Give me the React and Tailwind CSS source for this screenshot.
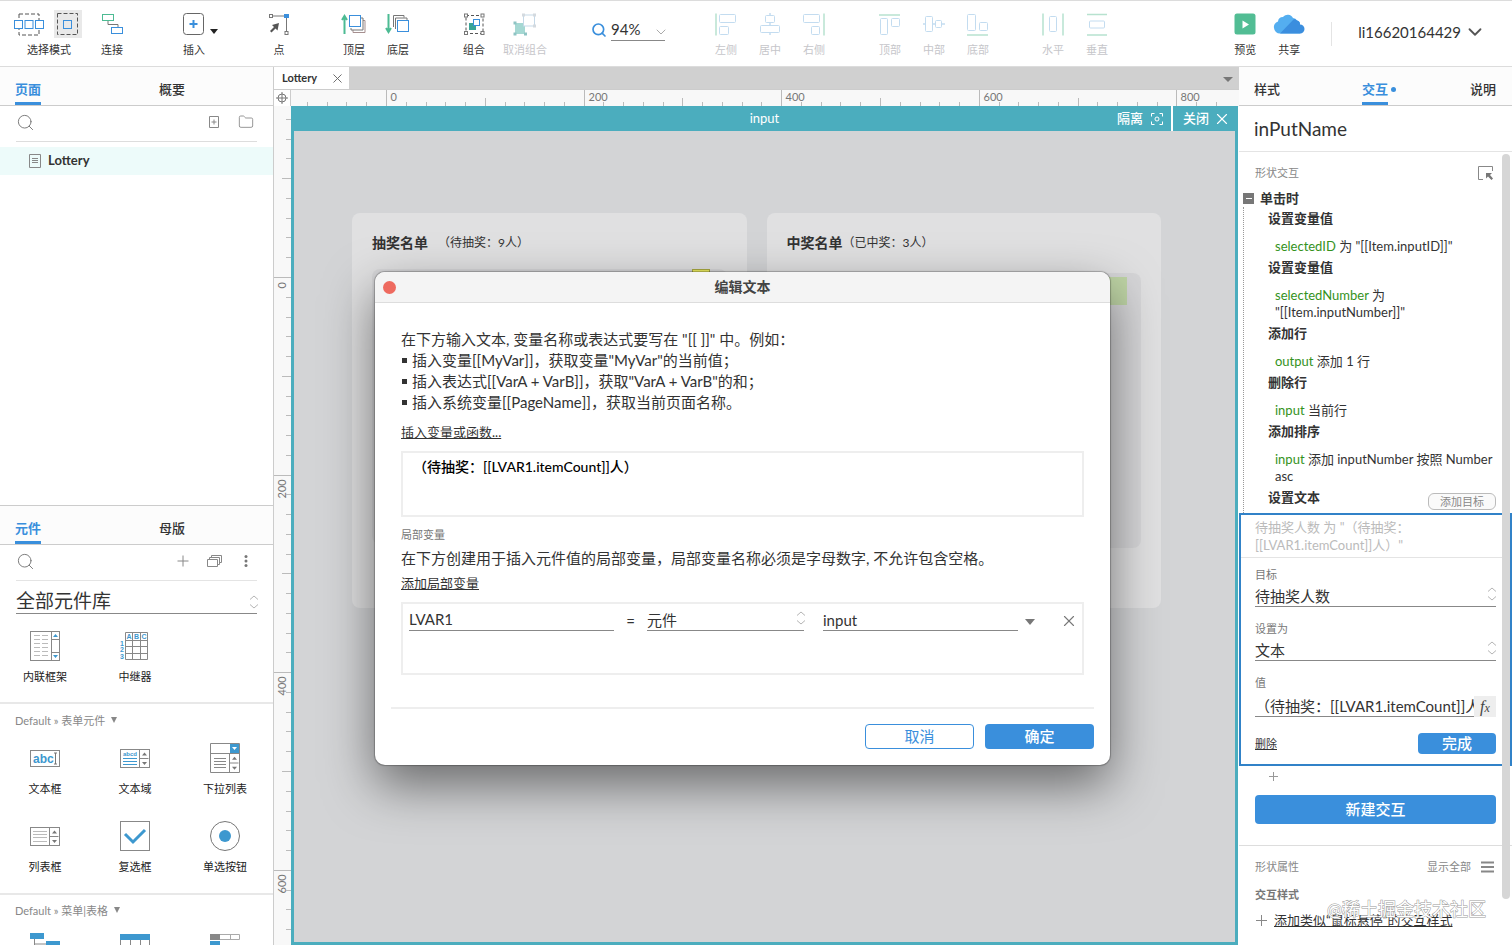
import React from 'react';
import { ChevronDown, Folder, Search, X } from 'lucide-react';

const BLUE = '#3a8fdc';
const GREEN = '#4dbb93';
const GRAY = '#777';

/* ---------- toolbar icons ---------- */

const Svg = ({ w = 26, h = 26, children, ...rest }) => (
  <svg width={w} height={h} viewBox={`0 0 ${w} ${h}`} fill="none" aria-hidden="true" {...rest}>
    {children}
  </svg>
);

const SelectIntersect = () => (
  <Svg w={30}>
    <rect x="5" y="3" width="20" height="21" stroke="#555" strokeDasharray="4 2" />
    <g fill="#fff" stroke={BLUE}>
      <rect x="0.5" y="9.5" width="8" height="8" />
      <rect x="11" y="9.5" width="8" height="8" />
      <rect x="21.5" y="9.5" width="8" height="8" />
    </g>
  </Svg>
);

const SelectContain = () => (
  <Svg>
    <rect x="3.5" y="2.5" width="20" height="21" stroke="#555" strokeDasharray="4 2" />
    <rect x="9.5" y="9.5" width="8" height="8" stroke={BLUE} />
  </Svg>
);

const Connect = () => (
  <Svg>
    <path d="M9 9.5v4h10v3" stroke={GRAY} />
    <rect x="3.5" y="3.5" width="11" height="6" stroke={GREEN} />
    <rect x="12.5" y="16.5" width="11" height="6" stroke={BLUE} />
  </Svg>
);

const Insert = () => (
  <Svg>
    <rect x="2.5" y="2.5" width="20" height="21" rx="3" stroke="#666" />
    <path d="M12.5 9v8M8.5 13h8" stroke={BLUE} strokeWidth="2" />
  </Svg>
);

const PointIcon = () => (
  <Svg>
    <path d="M5 5h15.500v17" stroke={GRAY} />
    <rect x="3.5" y="3.5" width="3" height="3" fill="#fff" stroke={GRAY} />
    <rect x="18" y="3" width="5" height="4" fill={BLUE} />
    <rect x="19" y="20.5" width="3" height="3" fill="#fff" stroke={GRAY} />
    <path d="M13 12l-7 2 2 2-4 4 1.500 1.500 4-4 2 2z" fill="#555" />
  </Svg>
);

const ToFront = () => (
  <Svg>
    <path d="M3.500 23V5M1 9l2.500-4L6 9" stroke={GREEN} strokeWidth="2" />
    <path d="M12 19v2.500h12V9.500h-2" stroke="#a58f8f" />
    <path d="M10 17v2h12V7h-2" stroke={GRAY} />
    <rect x="8.500" y="4.500" width="11" height="11" fill="#fff" stroke={BLUE} />
  </Svg>
);

const ToBack = () => (
  <Svg>
    <path d="M3.500 3v18M1 17l2.500 4L6 17" stroke={GREEN} strokeWidth="2" />
    <path d="M8.500 16V4.500H19v2M10.500 18V7H22v2" stroke={GRAY} />
    <rect x="12.500" y="9.500" width="11" height="11" fill="#fff" stroke={BLUE} />
  </Svg>
);

const GroupIcon = () => (
  <Svg>
    <rect x="5" y="4.500" width="17" height="18" stroke="#555" strokeDasharray="3 2" />
    <g fill="#fff" stroke={GRAY}>
      <rect x="3.500" y="3" width="3" height="3" />
      <rect x="20" y="3" width="3" height="3" />
      <rect x="3.500" y="20.500" width="3" height="3" />
      <rect x="20" y="20.500" width="3" height="3" />
    </g>
    <rect x="8" y="12" width="7" height="7" fill="#3aa597" />
    <rect x="12.500" y="8.500" width="6" height="6" fill="#fff" stroke={BLUE} />
  </Svg>
);

const UngroupIcon = () => (
  <Svg>
    <rect x="3" y="12" width="10" height="11" fill="#a5d8d3" />
    <rect x="11.500" y="4" width="11" height="11" fill="#fff" stroke="#c5d9e8" />
    <g fill="#d4dadf">
      <rect x="10" y="2.500" width="3" height="3" />
      <rect x="21" y="2.500" width="3" height="3" />
      <rect x="21" y="13.500" width="3" height="3" />
    </g>
    <g fill="#8fc4c4">
      <rect x="1.500" y="10.500" width="3" height="3" />
      <rect x="1.500" y="21.500" width="3" height="3" />
      <rect x="12" y="21.500" width="3" height="3" />
    </g>
  </Svg>
);

// Faded two-shape icon: a list of boxes plus the guide line they align to.
const AlignIcon = ({ boxes, guide, blueGuide }) => (
  <Svg>
    <path d={guide} stroke={blueGuide ? '#c3dcf0' : '#b7e2cf'} strokeWidth="1.5" />
    {boxes.map(([x, y, w, h]) => (
      <rect key={`${x}-${y}`} x={x} y={y} width={w} height={h} rx="1" fill="#fff" stroke="#c3dcf0" />
    ))}
  </Svg>
);

const Play = () => (
  <Svg>
    <rect x="2.5" y="2.5" width="21" height="21" rx="2.5" fill="#52bd94" />
    <path d="M10.5 9.5v8l6.500-4z" fill="#fff" />
  </Svg>
);

const Cloud = () => (
  <Svg w={32}>
    <path d="M7 22.500A6 6 0 0 1 1 17a5.500 5.500 0 0 1 4-6.500 5 5 0 0 1 5-4.500 6 6 0 0 1 10 1 4.500 4.500 0 0 1 4 2.500 4 4 0 0 1 3 4.500A4.500 4.500 0 0 1 27 22.500z" fill="#54aef0" />
    <path d="M7 22.500L21 8a4.500 4.500 0 0 1 3 1.500 4 4 0 0 1 3 4A4.500 4.500 0 0 1 27 22.500z" fill="#3b8ede" />
  </Svg>
);

const TOOL_GROUPS = [
  { gap: 'ml-[38px]', tools: [{ label: '插入', icon: <Insert />, caret: true }] },
  { gap: 'ml-[41px]', tools: [{ label: '点', icon: <PointIcon /> }] },
  {
    gap: 'ml-[31px]',
    tools: [
      { label: '顶层', icon: <ToFront /> },
      { label: '底层', icon: <ToBack /> },
    ],
  },
  { gap: 'ml-8', tools: [{ label: '组合', icon: <GroupIcon /> }] },
  { gap: 'ml-[7px]', tools: [{ label: '取消组合', icon: <UngroupIcon />, off: true }] },
];

const ALIGN_GROUPS = [
  {
    gap: 'ml-[39px]',
    tools: [
      { label: '左侧', icon: <AlignIcon guide="M3 2.5v22" boxes={[[6.5, 3.5, 16, 8], [6.5, 15.5, 9, 8]]} /> },
      { label: '居中', icon: <AlignIcon blueGuide guide="M13 2v22" boxes={[[8.5, 4.5, 9, 7], [3.5, 14.5, 19, 7]]} /> },
      { label: '右侧', icon: <AlignIcon guide="M23 2.5v22" boxes={[[2.5, 3.5, 16, 8], [10.5, 15.5, 8, 8]]} /> },
    ],
  },
  {
    gap: 'ml-8',
    tools: [
      { label: '顶部', icon: <AlignIcon guide="M2 4h21" boxes={[[3.5, 7.5, 7, 16], [14.5, 7.5, 8, 8]]} /> },
      { label: '中部', icon: <AlignIcon blueGuide guide="M2 13h22" boxes={[[4.5, 5.5, 7, 15], [14.5, 9.5, 6, 7]]} /> },
      { label: '底部', icon: <AlignIcon guide="M2 24h21" boxes={[[2.5, 3.5, 8, 16], [14.5, 11.5, 8, 8]]} /> },
    ],
  },
  {
    gap: 'ml-[31px]',
    tools: [
      { label: '水平', icon: <AlignIcon guide="M3 2.5v22M23 2.5v22" boxes={[[9.5, 5.5, 7, 15]]} /> },
      { label: '垂直', icon: <AlignIcon guide="M3 3.5h20M3 24h20" boxes={[[5.5, 10, 15, 7]]} /> },
    ],
  },
];

const Tool = ({ label, icon, off, caret }) => (
  <button
    type="button"
    disabled={off}
    className={`relative flex w-11 flex-col items-center gap-1.5 whitespace-nowrap text-[11px] leading-[14px] ${off ? 'text-[#c6c6ca]' : 'text-[#333]'}`}
  >
    {icon}
    {label}
    {caret && (
      <span className="absolute -right-0.5 top-[18px] border-x-4 border-t-[5px] border-x-transparent border-t-[#222]" />
    )}
  </button>
);

const ToolGroup = ({ gap, tools, off }) => (
  <div className={`flex ${gap}`}>
    {tools.map((t) => (
      <Tool key={t.label} off={off} {...t} />
    ))}
  </div>
);

function Toolbar() {
  return (
    <header className="flex h-[67px] shrink-0 items-start border-b border-t border-[#dcdcdc] bg-white pl-3.5 pr-[26px] pt-[10px]">
      <div className="flex w-[70px] flex-col items-center gap-1.5 text-[11px] leading-[14px]">
        <div className="flex h-[26px] w-full items-center gap-[10px]">
          <button type="button" aria-label="相交选中"><SelectIntersect /></button>
          <button type="button" aria-label="包含选中" className="bg-[#e9e9e9] py-px pr-0.5"><SelectContain /></button>
        </div>
        选择模式
      </div>
      <div className="ml-1.5">
        <Tool label="连接" icon={<Connect />} />
      </div>
      {TOOL_GROUPS.map((g) => (
        <ToolGroup key={g.tools[0].label} {...g} />
      ))}

      <label className="ml-11 flex items-center gap-1 pt-[7px]">
        <Search size={16} strokeWidth={2.5} color={BLUE} />
        <span className="relative flex border-b border-[#888]">
          <select aria-label="缩放" className="h-[22px] w-[54px] appearance-none text-[15px] leading-[22px] outline-none">
            <option>94%</option>
          </select>
          <ChevronDown size={16} strokeWidth={1.5} className="pointer-events-none absolute -right-1 top-1.5 text-[#aaa]" />
        </span>
      </label>

      {ALIGN_GROUPS.map((g) => (
        <ToolGroup key={g.tools[0].label} off {...g} />
      ))}

      <div className="ml-auto flex">
        <Tool label="预览" icon={<Play />} />
        <Tool label="共享" icon={<Cloud />} />
      </div>
      <div className="ml-5 mt-[11px] h-6 w-px bg-[#e4e4e4]" />
      <button type="button" className="ml-[26px] mt-[10px] flex items-center gap-[3px] text-[15px] leading-[22px]">
        li16620164429
        <ChevronDown size={22} color="#555" />
      </button>
    </header>
  );
}

/* ---------- shared bits ---------- */

const UpDown = ({ className }) => (
  <Svg w={10} h={14} className={`pointer-events-none absolute ${className}`}>
    <path d="M1 4.500l4-3.500 4 3.500M1 9.500l4 3.500 4-3.500" stroke="#b5b5b5" />
  </Svg>
);

const Tabs = ({ items, className = '' }) => (
  <nav className={`flex h-[39px] shrink-0 items-stretch border-b border-[#ccc] bg-[#fcfcfc] text-[13px] ${className}`}>
    {items.map(({ label, active, dot, width }) => (
      <div key={label} className={width}>
        <button
          type="button"
          className={`relative h-[38px] border-b-[3px] pt-2.5 ${active ? 'border-[#3a8fdc] font-bold text-[#3a8fdc]' : 'border-transparent font-medium'}`}
        >
          {label}
          {dot && <span className="absolute -right-2 top-5 size-[5px] rounded-full bg-[#3a8fdc]" />}
        </button>
      </div>
    ))}
  </nav>
);

const SearchIcon = () => <Search size={19} strokeWidth={1.2} color="#777" />;

/* ---------- left column ---------- */

const ScrollArrows = ({ x, y, h }) => (
  <g>
    <path d={`M${x} ${y}v${h}M${x} ${y + h / 2}h9`} stroke="#888" />
    <path d={`M${x + 2.5} ${y + h / 4 + 1.5}h5l-2.500-3z`} fill="#777" />
    <path d={`M${x + 2.5} ${y + (h * 3) / 4 - 1}h5l-2.500 3z`} fill="#777" />
  </g>
);

const InlineFrameIcon = () => (
  <Svg w={30} h={30}>
    <rect x="0.5" y="0.5" width="29" height="29" stroke="#888" fill="#fff" />
    <path d="M21.500 0v30M21.500 8.500h8M21.500 21.500h8" stroke="#888" />
    <path d="M4 4.500h6M12 4.500h6M4 8.500h6M12 8.500h6M4 12.500h6M12 12.500h6M4 16.500h6M12 16.500h6M4 20.500h6M12 20.500h6M4 24.500h6M12 24.500h6" stroke="#bbb" />
    <path d="M23 6h5l-2.500-3zM23 24h5l-2.500 3z" fill="#3d98cf" />
  </Svg>
);

const RepeaterIcon = () => (
  <Svg w={30} h={30}>
    <path d="M5.500 1.500h22v27h-22zM12.500 1.500v27M20.500 1.500v27M5.500 9.500h22M5.500 15.500h22M5.500 22.500h22" stroke="#888" />
    <g fill="#3d98cf" fontSize="7" fontWeight="700" fontFamily="Liberation Sans">
      <text x="6.500" y="8">A</text>
      <text x="14" y="8">B</text>
      <text x="21.500" y="8">C</text>
      <text x="0" y="15">1</text>
      <text x="0" y="21">2</text>
      <text x="0" y="28">3</text>
    </g>
  </Svg>
);

const TextFieldIcon = () => (
  <Svg w={30} h={30}>
    <rect x="0.5" y="7.5" width="29" height="16" stroke="#888" fill="#fff" />
    <text x="3" y="20" fill="#3d98cf" fontSize="12" fontWeight="700" fontFamily="Liberation Sans">abc</text>
    <path d="M25.500 10v11M24 10h3M24 21h3" stroke="#777" />
  </Svg>
);

const TextAreaIcon = () => (
  <Svg w={30} h={30}>
    <rect x="0.5" y="6.5" width="29" height="18" stroke="#888" fill="#fff" />
    <text x="3" y="13" fill="#3d98cf" fontSize="6" fontWeight="700" fontFamily="Liberation Sans">abcd</text>
    <path d="M3 15.500h14M3 18.500h14M3 21.500h14" stroke="#3d98cf" />
    <ScrollArrows x={19.5} y={6.5} h={18} />
  </Svg>
);

const DroplistIcon = () => (
  <Svg w={30} h={30}>
    <path d="M0.500 0.500h29v29h-29zM0 10.500h29" stroke="#888" />
    <rect x="20" y="1" width="9" height="9" fill="#3d98cf" />
    <path d="M22 4h5l-2.500 3z" fill="#fff" />
    <path d="M4 15.500h12M4 18.500h12M4 21.500h12M4 24.500h12" stroke="#888" />
    <ScrollArrows x={19.5} y={10.5} h={19} />
  </Svg>
);

const ListBoxIcon = () => (
  <Svg w={30} h={30}>
    <rect x="0.5" y="6.5" width="29" height="18" stroke="#888" fill="#fff" />
    <path d="M3 10.500h14M3 13.500h14M3 16.500h14M3 20.500h14" stroke="#bbb" />
    <ScrollArrows x={19.5} y={6.5} h={18} />
  </Svg>
);

const CheckboxIcon = () => (
  <Svg w={30} h={30}>
    <rect x="0.5" y="0.5" width="29" height="29" stroke="#888" fill="#fff" />
    <path d="M5 13l8 8L25 9" stroke="#3d98cf" strokeWidth="3" />
  </Svg>
);

const RadioIcon = () => (
  <Svg w={30} h={30}>
    <circle cx="15" cy="15" r="14.5" stroke="#777" />
    <circle cx="15" cy="15" r="6" fill="#3d98cf" />
  </Svg>
);

const TreeIcon = () => (
  <Svg w={30} h={30}>
    <path d="M4.500 6v18h12M4.500 11h12" stroke="#888" />
    <path d="M0 0h14v6H0zM16 8h14v6H16z" fill="#3d98cf" />
  </Svg>
);

const TableIcon = () => (
  <Svg w={30} h={30}>
    <path d="M0.500 1v28h29V1M10.500 7v22M20.500 7v22" stroke="#888" />
    <path d="M0 1h30v6H0z" fill="#3d98cf" />
  </Svg>
);

const MenuIcon = () => (
  <Svg w={30} h={30}>
    <path d="M0.500 1.500h29v5h-29zM20.500 1.500v5" stroke="#aaa" />
    <path d="M0 1h10v6H0z" fill="#888" />
    <path d="M0 8h10v6H0z" fill="#3d98cf" />
  </Svg>
);

const FORM_WIDGETS = [
  { label: '文本框', icon: <TextFieldIcon /> },
  { label: '文本域', icon: <TextAreaIcon /> },
  { label: '下拉列表', icon: <DroplistIcon /> },
  { label: '列表框', icon: <ListBoxIcon /> },
  { label: '复选框', icon: <CheckboxIcon /> },
  { label: '单选按钮', icon: <RadioIcon /> },
];

const Widget = ({ label, icon, ...rest }) => (
  <button type="button" className="flex flex-col items-center gap-2 text-[11px] leading-4 text-[#222]" {...rest}>
    {icon}
    {label}
  </button>
);

const LibHeading = ({ children }) => (
  <h3 className="flex items-center gap-1.5 px-[15px] text-[11px] leading-4 text-[#888]">
    {children}
    <span className="mb-0.5 border-x-[3px] border-t-[6px] border-x-transparent border-t-[#888]" />
  </h3>
);

function LeftColumn() {
  return (
    <aside className="flex w-[274px] shrink-0 flex-col border-r border-[#ccc] bg-white">
      <section className="min-h-0 flex-1">
        <Tabs
          className="pl-[15px]"
          items={[{ label: '页面', active: true, width: 'w-36' }, { label: '概要' }]}
        />
        <div className="mx-4 flex h-9 items-center border-b border-[#ddd] pb-[3px] pr-[3px] text-[#888]">
          <SearchIcon />
          <button type="button" aria-label="添加页面" className="ml-auto">
            <Svg w={12} h={14}>
              <path d="M1.500 1.500h9v11h-9zM3.500 7h5M6 4.500v5" stroke="#888" />
            </Svg>
          </button>
          <button type="button" aria-label="添加文件夹" className="ml-[18px]"><Folder size={16} strokeWidth={1.3} /></button>
        </div>
        <a href="#lottery" className="mt-[5px] flex h-7 items-center gap-[7px] bg-[#edfbfa] pl-[29px] text-[13px] font-bold">
          <Svg w={12} h={14}>
            <path d="M.5.5h11v13H.5zM3 4.500h6M3 6.500h6M3 8.500h6" stroke="#888" />
          </Svg>
          Lottery
        </a>
      </section>

      <section className="h-[440px] shrink-0 overflow-hidden border-t border-[#ccc]">
        <Tabs
          className="pl-[15px]"
          items={[{ label: '元件', active: true, width: 'w-36' }, { label: '母版' }]}
        />
        <div className="mx-4 flex h-9 items-center border-b border-[#e4e4e4] pb-[3px] pr-2">
          <SearchIcon />
          <button type="button" aria-label="添加元件库" className="ml-auto">
            <Svg w={12} h={12}><path d="M6 .5v11M.5 6h11" stroke="#888" /></Svg>
          </button>
          <button type="button" aria-label="管理元件库" className="ml-[18px]">
            <Svg w={16} h={14}>
              <path d="M.5 5.500h10v7H.5zM2.500 5.500v-2h10v7h-2M4.500 3.500v-2h10v7h-2" stroke="#888" />
            </Svg>
          </button>
          <button type="button" aria-label="更多" className="ml-5">
            <Svg w={6} h={14}>
              <g fill="#777">
                <circle cx="3" cy="2.5" r="1.5" />
                <circle cx="3" cy="7" r="1.5" />
                <circle cx="3" cy="11.5" r="1.5" />
              </g>
            </Svg>
          </button>
        </div>
        <div className="relative mx-4 mt-2 border-b border-[#888]">
          <select aria-label="元件库" className="block h-6 w-full appearance-none text-[19px] leading-6 outline-none">
            <option>全部元件库</option>
          </select>
          <UpDown className="-right-0.5 top-1.5" />
        </div>
        <div className="grid grid-cols-3 pb-[17px] pr-[3px] pt-[17px]">
          <Widget label="内联框架" icon={<InlineFrameIcon />} />
          <Widget label="中继器" icon={<RepeaterIcon />} />
        </div>
        <div className="border-t-2 border-[#e8e8e8] pt-[9px]">
          <LibHeading>Default » 表单元件</LibHeading>
          <div className="grid grid-cols-3 gap-y-6 pb-[18px] pr-[3px] pt-3.5">
            {FORM_WIDGETS.map((w) => (
              <Widget key={w.label} {...w} />
            ))}
          </div>
        </div>
        <div className="border-t-2 border-[#e8e8e8] pt-2">
          <LibHeading>Default » 菜单|表格</LibHeading>
          <div className="grid grid-cols-3 pr-[3px] pt-3.5">
            <Widget aria-label="树" icon={<TreeIcon />} />
            <Widget aria-label="表格" icon={<TableIcon />} />
            <Widget aria-label="菜单" icon={<MenuIcon />} />
          </div>
        </div>
      </section>
    </aside>
  );
}

/* ---------- canvas ---------- */

const STEP = 19.76; // pixels per 20 canvas units at the current zoom
const range = (from, to) => Array.from({ length: to - from }, (_, i) => i + from);
const tickStart = (n) => (n % 10 === 0 ? 0 : n % 5 === 0 ? 8 : 12);

function HorizontalRuler() {
  return (
    <svg className="h-[17px] flex-1 bg-[#f8f8f8]" aria-hidden="true">
      {range(-5, 43).map((n) => {
        const x = Math.round(96 + n * STEP) - 0.5;
        return (
          <g key={n}>
            <line x1={x} x2={x} y1={tickStart(n)} y2="17" stroke="#bbb" />
            {n % 10 === 0 && <text x={x + 4} y="11" fontSize="11" fill="#777">{n * 20}</text>}
          </g>
        );
      })}
    </svg>
  );
}

function VerticalRuler() {
  return (
    <svg className="h-full w-[17px] shrink-0 bg-[#f8f8f8]" aria-hidden="true">
      {range(-8, 34).map((n) => {
        const y = Math.round(171 + n * STEP) + 0.5;
        return (
          <g key={n}>
            <line y1={y} y2={y} x1={tickStart(n)} x2="17" stroke="#bbb" />
            {n % 10 === 0 && (
              <text transform={`translate(12 ${y + (n === 0 ? 11 : 23)}) rotate(-90)`} fontSize="11" fill="#777">
                {n * 20}
              </text>
            )}
          </g>
        );
      })}
    </svg>
  );
}

const ListCard = ({ title, note, children }) => (
  <div className="h-[395px] flex-1 rounded-lg bg-[#e0e0e1] px-5 pt-5">
    <h2 className="flex items-center text-sm font-bold leading-5">
      {title}
      <span className="ml-2.5 text-xs font-normal">{note}</span>
    </h2>
    <div className="mt-5 h-[275px] rounded-lg bg-[#d6d6d8]">{children}</div>
  </div>
);

function Canvas() {
  return (
    <main className="flex min-w-0 flex-1 flex-col">
      <div className="flex h-[22px] shrink-0 bg-[#d0d0d0] text-[11px] font-bold">
        <div className="flex w-[75px] items-center justify-between bg-white pl-2 pr-1 pt-px">
          Lottery
          <button type="button" aria-label="关闭 Lottery"><X size={15} strokeWidth={1.5} color="#666" /></button>
        </div>
        <button type="button" aria-label="所有标签" className="ml-auto mr-1.5 flex items-center pt-0.5">
          <span className="border-x-[5px] border-t-[5px] border-x-transparent border-t-[#777]" />
        </button>
      </div>
      <div className="flex h-[17px] shrink-0 border-t border-[#ccc]">
        <div className="flex w-[17px] items-center justify-center border-r border-[#ccc] bg-white">
          <Svg w={12} h={12}>
            <circle cx="6" cy="6" r="4" stroke="#777" />
            <path d="M6 0v12M0 6h12" stroke="#777" />
          </Svg>
        </div>
        <HorizontalRuler />
      </div>
      <div className="flex min-h-0 flex-1">
        <VerticalRuler />
        <div className="mr-px flex-1 border-x-[3px] border-b-[3px] border-[#4badbe] bg-[#d3d4d6]">
          <div className="grid h-[25px] grid-cols-[1fr_auto_1fr] items-center bg-[#4badbe] text-[13px] text-white">
            <span />
            <span>input</span>
            <div className="flex h-full justify-end font-medium">
              <button type="button" className="flex items-center gap-2 border-r-2 border-white pr-2">
                隔离
                <Svg w={12} h={12}>
                  <path d="M.5 3.500v-3h3M8.500.5h3v3M11.500 8.500v3h-3M3.500 11.500h-3v-3" stroke="#fff" />
                  <circle cx="6" cy="6" r="2" stroke="#fff" />
                </Svg>
              </button>
              <button type="button" className="flex items-center gap-1 pl-2.5 pr-1">
                关闭
                <X size={18} strokeWidth={1.5} />
              </button>
            </div>
          </div>
          <div className="flex gap-5 pl-[58px] pr-[74px] pt-[82px]">
            <ListCard title="抽奖名单" note="（待抽奖：9人）">
              <div className="-mt-1 ml-80 h-3 w-[18px] border border-[#a8a840] bg-[#eeee60]" />
            </ListCard>
            <ListCard title="中奖名单" note={<span className="-ml-2.5">（已中奖：3人）</span>}>
              <div className="flex justify-end pr-3.5 pt-1">
                <div className="h-7 w-[260px] bg-[#bfd5a6]" />
              </div>
            </ListCard>
          </div>
        </div>
      </div>
    </main>
  );
}

/* ---------- right column ---------- */

const ACTIONS = [
  { title: '设置变量值', target: 'selectedID', rest: '为', value: '"[[Item.inputID]]"' },
  { title: '设置变量值', target: 'selectedNumber', rest: '为', value: '"[[Item.inputNumber]]"' },
  { title: '添加行', target: 'output', rest: '添加 1 行' },
  { title: '删除行', target: 'input', rest: '当前行' },
  { title: '添加排序', target: 'input', rest: '添加 inputNumber 按照 Number asc' },
];

const SelectField = ({ id, label, value }) => (
  <div className="mb-3.5">
    <label htmlFor={id} className="block text-[11px] leading-4 text-[#777]">{label}</label>
    <div className="relative mt-1 border-b border-[#888]">
      <select id={id} className="block h-[19px] w-full appearance-none text-[15px] leading-[19px] outline-none">
        <option>{value}</option>
      </select>
      <UpDown className="-right-px top-0" />
    </div>
  </div>
);

function RightColumn() {
  return (
    <aside className="relative flex w-[273px] shrink-0 flex-col overflow-hidden bg-white">
      <Tabs
        className="justify-between pl-[15px] pr-4"
        items={[{ label: '样式' }, { label: '交互', active: true, dot: true }, { label: '说明' }]}
      />
      <h1 className="shrink-0 border-b border-[#e4e4e4] px-[15px] pt-px text-[19px] leading-[44px]">inPutName</h1>

      <div className="flex items-center justify-between pl-4 pr-[19px] pt-[13px] text-[11px] leading-4 text-[#888]">
        形状交互
        <button type="button" aria-label="选择目标">
          <Svg w={16} h={16}>
            <path d="M15.500 6V1.500H1.500v13H6" stroke="#888" />
            <path d="M9 8h6l-2 2 3 3.500-1.500 1.500-3.500-3.500-2 2z" fill="#777" />
          </Svg>
        </button>
      </div>

      <div className="pl-1 pr-4 pt-[9px] text-[13px] leading-[17px]">
        <div className="flex items-center gap-1.5 font-bold">
          <button type="button" aria-label="折叠" className="flex size-[11px] items-center justify-center bg-[#777]">
            <span className="h-px w-1.5 bg-white" />
          </button>
          单击时
        </div>
        <div className="border-l border-dotted border-[#999] pb-[3px] pl-6 pt-[3px]">
          {ACTIONS.map((a, i) => (
            <div key={i} className="pb-1">
              <h4 className="font-bold">{a.title}</h4>
              <p className="pl-[7px] pt-[11px]">
                <span className="text-[#34921c]">{a.target}</span> {a.rest}{' '}
                {a.value && <span className="inline-block">{a.value}</span>}
              </p>
            </div>
          ))}
          <div className="flex items-start justify-between font-bold">
            设置文本
            <button type="button" className="mt-1 h-[17px] w-[68px] rounded-md border border-[#bbb] bg-[#fafafa] text-[11px] font-normal leading-[15px] text-[#888]">
              添加目标
            </button>
          </div>
        </div>
      </div>

      <div className="border-2 border-[#3182c8]">
        <p className="border-b border-[#e4e4e4] pb-[3px] pl-3.5 pr-16 pt-[3px] text-[13px] leading-[18px] text-[#bbb]">
          待抽奖人数 为 "（待抽奖：[[LVAR1.itemCount]]人）"
        </p>
        <div className="pb-2.5 pl-3.5 pr-3.5 pt-[9px]">
          <SelectField id="target" label="目标" value="待抽奖人数" />
          <SelectField id="set-to" label="设置为" value="文本" />
          <label htmlFor="value" className="block text-[11px] leading-4 text-[#777]">值</label>
          <div className="mt-[5px] flex h-[21px]">
            <input
              id="value"
              defaultValue="（待抽奖：[[LVAR1.itemCount]]人）"
              className="min-w-0 flex-1 border-b border-[#888] text-[15px] outline-none"
            />
            <button type="button" aria-label="编辑表达式" className="w-[22px] bg-[#eee] font-['Liberation_Serif',serif] text-base italic leading-5 text-[#444]">
              f<span className="text-xs">x</span>
            </button>
          </div>
          <div className="mt-4 flex items-center justify-between">
            <button type="button" className="text-[11px] leading-4 underline">删除</button>
            <button type="button" className="h-[21px] w-[78px] rounded-sm bg-[#3a8fdc] text-[15px] font-medium leading-[21px] text-white">完成</button>
          </div>
        </div>
      </div>

      <div className="px-4">
        <button type="button" aria-label="添加动作" className="ml-3.5 mt-1.5 block">
          <Svg w={9} h={9}><path d="M4.500 0v9M0 4.500h9" stroke="#999" /></Svg>
        </button>
        <button type="button" className="mt-3.5 h-[29px] w-full rounded-sm bg-[#3a8fdc] text-[15px] font-medium text-white">
          新建交互
        </button>
      </div>

      <div className="mt-[21px] border-t border-[#ddd] pl-4 pr-[18px] pt-[13px] text-[11px] leading-4 text-[#888]">
        <div className="flex items-center">
          形状属性
          <button type="button" className="ml-auto flex items-center gap-2.5">
            显示全部
            <Svg w={13} h={12}><path d="M0 1.500h13M0 6h13M0 10.500h13" stroke="#888" strokeWidth="2" /></Svg>
          </button>
        </div>
        <h4 className="pt-3 font-bold text-[#777]">交互样式</h4>
        <button type="button" className="flex items-center gap-1.5 pt-2 text-[13px] leading-[18px] text-[#333]">
          <Svg w={13} h={13}><path d="M6.500 1v11M1 6.500h11" stroke="#888" /></Svg>
          <span className="underline">添加类似“鼠标悬停”的交互样式</span>
        </button>
      </div>

      <div className="absolute right-0.5 top-[87px] h-[745px] w-2 rounded-full bg-[#d6d6d6]" />
    </aside>
  );
}

/* ---------- dialog ---------- */

function EditTextDialog() {
  return (
    <div
      role="dialog"
      aria-labelledby="dialog-title"
      className="absolute left-[375px] top-[272px] w-[735px] rounded-[10px] bg-white shadow-[0_0_1px_1px_rgba(0,0,0,0.25),0_20px_50px_rgba(0,0,0,0.5)]"
    >
      <div className="relative flex h-[31px] items-center justify-center rounded-t-[10px] border-b border-[#ddd] bg-[#f4f4f4]">
        <button type="button" aria-label="关闭" className="absolute left-2 size-[13px] rounded-full bg-[#ee6a5f]" />
        <h2 id="dialog-title" className="text-sm font-bold text-[#444]">编辑文本</h2>
      </div>

      <div className="px-[26px] pt-[26px]">
        <div className="text-[15px] leading-[21px]">
          <p>在下方输入文本, 变量名称或表达式要写在 "[[ ]]" 中。例如：</p>
          <ul>
            {[
              '插入变量[[MyVar]]，获取变量"MyVar"的当前值；',
              '插入表达式[[VarA + VarB]]，获取"VarA + VarB"的和；',
              '插入系统变量[[PageName]]，获取当前页面名称。',
            ].map((line) => (
              <li key={line} className="flex items-center gap-[5px] before:ml-px before:size-[5px] before:bg-[#333]">
                {line}
              </li>
            ))}
          </ul>
        </div>
        <a href="#insert" className="mt-[10px] block text-[13px] leading-[18px] underline">插入变量或函数...</a>
        <textarea
          aria-label="文本"
          defaultValue="（待抽奖：[[LVAR1.itemCount]]人）"
          className="mt-2.5 block h-[66px] w-full resize-none border-2 border-[#eee] px-2.5 py-1 text-sm font-medium leading-5 text-black outline-none"
        />
        <h3 className="mt-2.5 text-[11px] leading-4 text-[#777]">局部变量</h3>
        <p className="mt-[5px] whitespace-nowrap text-[15px] leading-[21px]">
          在下方创建用于插入元件值的局部变量，局部变量名称必须是字母数字, 不允许包含空格。
        </p>
        <a href="#add" className="mt-[5px] block text-[13px] leading-[18px] underline">添加局部变量</a>

        <div className="mt-2.5 flex h-[73px] items-start border-2 border-[#eee] pl-1.5 pr-1 pt-[5px] text-[15px]">
          <input
            aria-label="变量名称"
            defaultValue="LVAR1"
            className="h-[22px] w-[205px] border-b border-[#888] outline-none"
          />
          <span className="w-[33px] text-center leading-6">=</span>
          <div className="relative w-[157px] border-b border-[#888]">
            <select aria-label="变量类型" className="block h-[21px] w-full appearance-none outline-none">
              <option>元件</option>
            </select>
            <UpDown className="-right-0.5 top-0.5" />
          </div>
          <div className="relative ml-[19px] w-[195px] border-b border-[#888]">
            <select aria-label="元件" className="block h-[21px] w-full appearance-none outline-none">
              <option>input</option>
            </select>
            <span className="pointer-events-none absolute -right-[17px] top-2.5 border-x-[5px] border-t-[6px] border-x-transparent border-t-[#777]" />
          </div>
          <button type="button" aria-label="移除变量" className="ml-auto mt-[3px]"><X size={18} strokeWidth={1.5} color="#777" /></button>
        </div>
      </div>

      <div className="mx-4 mt-8 flex justify-end gap-[11px] border-t-2 border-[#eee] pb-4 pt-[15px] text-[15px]">
        <button type="button" className="h-[25px] w-[109px] rounded-sm border border-[#3a8fdc] leading-[23px] text-[#3a8fdc]">取消</button>
        <button type="button" className="h-[25px] w-[109px] rounded-sm bg-[#3a8fdc] font-medium leading-[25px] text-white">确定</button>
      </div>
    </div>
  );
}

export default function App() {
  return (
    <div className="relative flex h-screen flex-col overflow-hidden bg-white font-[Lato,'Noto_Sans_CJK_SC',sans-serif] text-[#333]">
      <Toolbar />
      <div className="flex min-h-0 flex-1">
        <LeftColumn />
        <Canvas />
        <RightColumn />
      </div>
      <EditTextDialog />
      <div className="pointer-events-none absolute bottom-6 right-[26px] text-lg leading-6 text-white [-webkit-text-stroke:1px_#999] [paint-order:stroke]">
        @稀土掘金技术社区
      </div>
    </div>
  );
}
